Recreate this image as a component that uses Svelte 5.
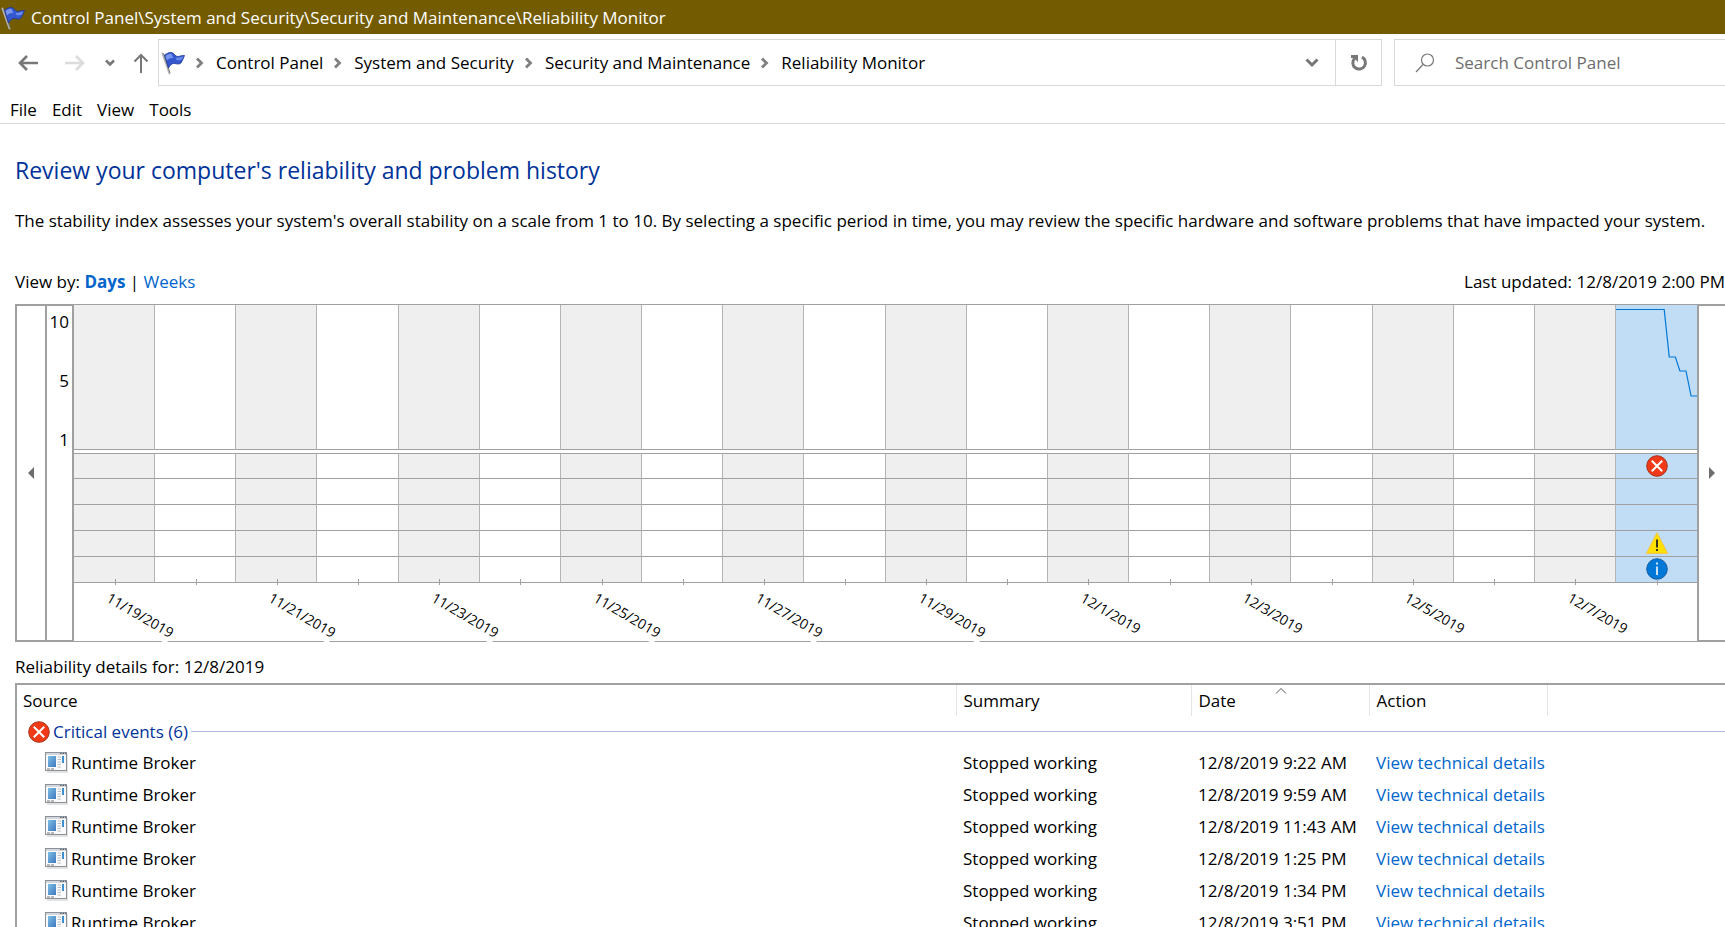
<script>
	const crumbs = ['Control Panel', 'System and Security', 'Security and Maintenance', 'Reliability Monitor'];
	const menus = ['File', 'Edit', 'View', 'Tools'];

	const labels = [
		'11/19/2019',
		'11/21/2019',
		'11/23/2019',
		'11/25/2019',
		'11/27/2019',
		'11/29/2019',
		'12/1/2019',
		'12/3/2019',
		'12/5/2019',
		'12/7/2019'
	];

	// one column per day, every second one carries a date
	const days = Array.from({ length: 20 }, (_, i) => ({
		label: i % 2 === 0 ? labels[i / 2] : '',
		events: i === 19 ? ['error', '', '', 'warning', 'info'] : ['', '', '', '', '']
	}));

	const events = [
		{ source: 'Runtime Broker', date: '12/8/2019 9:22 AM' },
		{ source: 'Runtime Broker', date: '12/8/2019 9:59 AM' },
		{ source: 'Runtime Broker', date: '12/8/2019 11:43 AM' },
		{ source: 'Runtime Broker', date: '12/8/2019 1:25 PM' },
		{ source: 'Runtime Broker', date: '12/8/2019 1:34 PM' },
		{ source: 'Runtime Broker', date: '12/8/2019 3:51 PM' }
	];

	let selected = $state(19);
	let search = $state('');
</script>

{#snippet flag()}
	<svg class="flag" width="24" height="24" viewBox="0 0 24 24" aria-hidden="true">
		<path d="M1.5 2.5 L8.5 22.5" stroke="#b4b4b4" stroke-width="2" stroke-linecap="round" />
		<path d="M2.5 2.5 L9 22" stroke="#6f6f6f" stroke-width="0.8" />
		<path
			d="M3.5 4 C6 2.5 8 1 10.500 1.500 C13.500 2 14 5.500 16.500 5.500 C19 5.500 21 4 23.500 4.500 C22.500 7 21.500 9.500 20 12 C18 13.500 16 13 14 12.500 C11.500 12 9.500 13.500 7.500 17 Z"
			fill="#3457cf"
			stroke="#1d3796"
			stroke-width="0.8"
		/>
		<path d="M4.500 5 C7 3 9 2.500 10.500 3 L12.500 7.500 C10 6.500 8 7.500 6 9.500 Z" fill="#7896ee" />
		<path d="M14.500 6.500 C17 7.500 19.500 6 22.300 5.500 L20.800 8.500 C18.500 9.500 16.500 9.500 15.500 9 Z" fill="#6c8cec" />
	</svg>
{/snippet}

{#snippet status(kind, size)}
	<svg width={size} height={size} viewBox="0 0 22 22" aria-label={kind} role="img">
		{#if kind === 'error'}
			<circle cx="11" cy="11" r="10.300" fill="#f03a17" stroke="#a8321c" />
			<path d="M5.800 5.800 L16.200 16.200 M16.200 5.800 L5.800 16.200" stroke="#fff" stroke-width="2" />
		{:else if kind === 'warning'}
			<path d="M11 0.800 L21.500 21.300 H0.500 Z" fill="#ffe100" stroke="#fdc33a" />
			<path d="M11 7.500 V15.500 M11 17 V19" stroke="#222" stroke-width="1.800" />
		{:else}
			<circle cx="11" cy="11" r="10.300" fill="#0078d7" stroke="#1a5fa3" />
			<path d="M11 4.500 V6.500 M11 8.500 V17" stroke="#fff" stroke-width="1.600" />
		{/if}
	</svg>
{/snippet}

{#snippet appIcon()}
	<svg width="24" height="22" viewBox="0 0 24 22" aria-hidden="true">
		<rect x="2" y="2" width="21" height="19" fill="#e2e2e2" />
		<rect x="0.500" y="0.500" width="21" height="18" fill="#fafafa" stroke="#8b9198" />
		<rect x="1" y="1" width="20" height="2" fill="#d3d8de" />
		<path d="M15 1.500 h1.500 M17.500 1.500 h1.500 M20 1.500 h1" stroke="#555d68" />
		<defs>
			<linearGradient id="pane" x1="0" y1="0" x2="1" y2="1">
				<stop offset="0" stop-color="#7cc0e6" />
				<stop offset="1" stop-color="#3f78bd" />
			</linearGradient>
		</defs>
		<rect x="3" y="4" width="8" height="11" fill="url(#pane)" />
		<path d="M12.500 5 h3.500 M12.500 7.500 h3.500 M12.500 10 h3.500 M12.500 12.500 h3.500 M12.500 15 h3.500" stroke="#b9bdc2" />
		<rect x="17" y="4" width="2" height="7" fill="#3f8fd0" />
		<path d="M2 17 h3 M6 17 h3" stroke="#777" />
	</svg>
{/snippet}

{#snippet chevron()}
	<svg width="10" height="12" viewBox="0 0 10 12" aria-hidden="true">
		<path d="M2 1.500 L6.500 6 L2 10.500" fill="none" stroke="#808080" stroke-width="2.800" />
	</svg>
{/snippet}

<div class="window">
	<header class="title">
		{@render flag()}
		<span>Control Panel\System and Security\Security and Maintenance\Reliability Monitor</span>
	</header>

	<div class="toolbar">
		<div class="nav">
			<button aria-label="Back">
				<svg width="20" height="18" viewBox="0 0 20 18">
					<path d="M20 9 H2 M9 2 L2 9 L9 16" fill="none" stroke="#777" stroke-width="2.600" />
				</svg>
			</button>
			<button aria-label="Forward" disabled>
				<svg width="20" height="18" viewBox="0 0 20 18">
					<path d="M0 9 H18 M11 2 L18 9 L11 16" fill="none" stroke="#dcdcdc" stroke-width="2.600" />
				</svg>
			</button>
			<button aria-label="Recent locations">
				<svg width="10" height="8" viewBox="0 0 10 8">
					<path d="M1 1.500 L5 5.500 L9 1.500" fill="none" stroke="#777" stroke-width="2.600" />
				</svg>
			</button>
			<button aria-label="Up">
				<svg width="16" height="20" viewBox="0 0 16 20">
					<path d="M8 20 V2 M1.500 8.500 L8 2 L14.500 8.500" fill="none" stroke="#777" stroke-width="2" />
				</svg>
			</button>
		</div>

		<nav class="address" aria-label="Address">
			{@render flag()}
			<ol>
				{#each crumbs as crumb}
					<li>
						{@render chevron()}
						<button>{crumb}</button>
					</li>
				{/each}
			</ol>
			<button class="history" aria-label="Previous locations">
				<svg width="14" height="10" viewBox="0 0 14 10">
					<path d="M1.500 1.500 L7 7 L12.500 1.500" fill="none" stroke="#777" stroke-width="3" />
				</svg>
			</button>
			<button class="refresh" aria-label="Refresh">
				<svg width="18" height="18" viewBox="0 0 18 18">
					<path d="M12 3.200 A6.300 6.300 0 1 1 4.500 4.500" fill="none" stroke="#777" stroke-width="3" />
					<path d="M1 1 H8 V8 L5.500 5.500 L3 4 H1 Z" fill="#777" />
				</svg>
			</button>
		</nav>

		<label class="search">
			<svg width="20" height="20" viewBox="0 0 20 20" aria-hidden="true">
				<circle cx="12.500" cy="7" r="6" fill="none" stroke="#777" stroke-width="1.200" />
				<path d="M8 11.500 L1 19" stroke="#777" stroke-width="1.200" />
			</svg>
			<input type="text" placeholder="Search Control Panel" aria-label="Search Control Panel" bind:value={search} />
		</label>
	</div>

	<div class="menu">
		{#each menus as item}
			<button>{item}</button>
		{/each}
	</div>

	<main>
		<h1>Review your computer's reliability and problem history</h1>
		<p class="intro">
			The stability index assesses your system's overall stability on a scale from 1 to 10. By selecting a specific
			period in time, you may review the specific hardware and software problems that have impacted your system.
		</p>

		<div class="view">
			<span>View by: <a class="current" href="#days">Days</a> | <a href="#weeks">Weeks</a></span>
			<span>Last updated: 12/8/2019 2:00 PM</span>
		</div>

		<section class="chart">
			<button class="scroll" aria-label="Earlier">
				<svg width="6" height="12" viewBox="0 0 6 12"><path d="M6 0 V12 L0 6 Z" fill="#6d6d6d" /></svg>
			</button>
			<div class="scale">
				<span>10</span>
				<span>5</span>
				<span>1</span>
			</div>
			<div class="days">
				{#each days as day, i}
					<button class="day" class:selected={i === selected} aria-label="Day {i + 1}" onclick={() => (selected = i)}>
						<span class="index">
							{#if i === 19}
								<svg width="100%" height="144" viewBox="0 0 80 144" preserveAspectRatio="none">
									<path
										d="M0 4.500 H47.500 L52.500 52 H58.500 L63 66 H69 L74 91 H80"
										fill="none"
										stroke="#0078d7"
										stroke-width="1.200"
									/>
								</svg>
							{/if}
						</span>
						{#each day.events as kind}
							<span class="cell">
								{#if kind}{@render status(kind, 22)}{/if}
							</span>
						{/each}
						<span class="axis">
							{#if day.label}<span class="date">{day.label}</span>{/if}
						</span>
					</button>
				{/each}
			</div>
			<button class="scroll later" aria-label="Later">
				<svg width="6" height="12" viewBox="0 0 6 12"><path d="M0 0 V12 L6 6 Z" fill="#6d6d6d" /></svg>
			</button>
		</section>

		<h2>Reliability details for: 12/8/2019</h2>

		<div class="details">
			<table>
				<colgroup>
					<col />
					<col class="w-summary" />
					<col class="w-date" />
					<col class="w-action" />
					<col class="w-rest" />
				</colgroup>
				<thead>
					<tr>
						<th>Source</th>
						<th>Summary</th>
						<th class="sorted">
							Date
							<svg width="12" height="8" viewBox="0 0 12 8" aria-hidden="true">
								<path d="M1 6.500 L6 1.500 L11 6.500" fill="none" stroke="#555" />
							</svg>
						</th>
						<th>Action</th>
						<th></th>
					</tr>
				</thead>
				<tbody>
					<tr>
						<td class="group" colspan="5">
							<div>
								{@render status('error', 22)}
								<span>Critical events (6)</span>
								<hr />
							</div>
						</td>
					</tr>
					{#each events as event}
						<tr>
							<td>
								<div class="source">{@render appIcon()}{event.source}</div>
							</td>
							<td>Stopped working</td>
							<td>{event.date}</td>
							<td><a href="#details">View technical details</a></td>
							<td></td>
						</tr>
					{/each}
				</tbody>
			</table>
		</div>
	</main>
</div>

<style>
	:global(body) {
		margin: 0;
		background: #fff;
	}

	.window {
		height: 100vh;
		overflow: hidden;
		font-family: 'Open Sans', 'Noto Sans', sans-serif;
		font-size: 17px;
		line-height: 24px;
		color: #000;
	}

	button {
		margin: 0;
		padding: 0;
		border: 0;
		background: none;
		font: inherit;
		color: inherit;
	}

	svg {
		display: block;
		flex: none;
	}

	a {
		color: #0066cc;
		text-decoration: none;
	}

	.title {
		display: flex;
		align-items: center;
		gap: 6px;
		box-sizing: border-box;
		height: 34px;
		padding: 2px 0 0 1px;
		background: #735b02;
		color: #fff;
		white-space: nowrap;
	}

	.toolbar {
		display: flex;
		align-items: center;
		padding-top: 5px;
	}

	.nav {
		display: flex;
		align-items: center;
		width: 140px;
		padding-left: 18px;
	}

	.nav button:nth-child(2) {
		margin: 0 20px 0 27px;
	}

	.nav button:nth-child(4) {
		margin-left: 18px;
	}

	.address {
		display: flex;
		align-items: center;
		flex: 1;
		height: 45px;
		padding-left: 2px;
		border: 1px solid #d9d9d9;
	}

	ol {
		display: flex;
		flex: 1;
		margin: 0;
		padding: 0;
		list-style: none;
	}

	li {
		display: flex;
		align-items: center;
		gap: 11px;
		margin-left: 10px;
		white-space: nowrap;
	}

	.history {
		padding: 0 16px;
	}

	.refresh {
		display: flex;
		align-items: center;
		justify-content: center;
		align-self: stretch;
		width: 46px;
		border-left: 1px solid #d9d9d9;
	}

	.search {
		display: flex;
		align-items: center;
		gap: 20px;
		width: 310px;
		height: 45px;
		margin-left: 12px;
		padding-left: 20px;
		border: 1px solid #d9d9d9;
		border-right: 0;
	}

	.search input {
		flex: 1;
		min-width: 0;
		padding: 0;
		border: 0;
		outline: 0;
		font: inherit;
	}

	.search input::placeholder {
		color: #6d6d6d;
		opacity: 1;
	}

	.menu {
		display: flex;
		gap: 15px;
		padding: 12px 10px 1px;
		border-bottom: 1px solid #d9d9d9;
	}

	main {
		padding: 29px 0 0 15px;
	}

	h1 {
		margin: 0;
		font-size: 23px;
		font-weight: 400;
		line-height: 34px;
		color: #003399;
	}

	.intro {
		margin: 22px 0 37px;
		white-space: nowrap;
	}

	.view {
		display: flex;
		justify-content: space-between;
		margin-bottom: 10px;
	}

	.current {
		font-weight: 700;
	}

	.chart {
		display: flex;
		height: 338px;
	}

	.scroll {
		display: flex;
		align-items: center;
		justify-content: center;
		width: 32px;
		border: 2px solid #a0a0a0;
	}

	.later {
		width: 28px;
		border-right: 0;
	}

	.scale {
		display: flex;
		flex-direction: column;
		gap: 35px;
		width: 22px;
		padding: 4px 3px 0 0;
		border: 2px solid #a0a0a0;
		border-left: 0;
		text-align: right;
	}

	.days {
		display: flex;
		flex: 1;
		border: solid #a0a0a0;
		border-width: 1px 0;
	}

	.day {
		display: flex;
		flex-direction: column;
		flex: 1 1 0;
		min-width: 0;
	}

	.index,
	.cell {
		display: flex;
		align-items: center;
		justify-content: center;
		box-sizing: border-box;
		width: 100%;
		height: 26px;
		padding-bottom: 1px;
		border-right: 1px solid #b4b4b4;
		border-bottom: 1px solid #a0a0a0;
	}

	.day:last-child .index,
	.day:last-child .cell {
		border-right: 0;
	}

	.index {
		height: 145px;
		margin-bottom: 3px;
		padding: 0;
	}

	.index + .cell {
		border-top: 1px solid #a0a0a0;
	}

	.day:nth-child(odd) .index,
	.day:nth-child(odd) .cell {
		background: #efefef;
	}

	.day.selected .index,
	.day.selected .cell {
		background: #c0ddf5;
	}

	.axis {
		position: relative;
		width: 100%;
		flex: 1;
	}

	.axis::before {
		content: '';
		position: absolute;
		top: -4px;
		left: 50%;
		height: 6px;
		border-left: 1px solid #a0a0a0;
	}

	.date {
		position: absolute;
		top: 5px;
		left: 48%;
		padding-bottom: 2px;
		background: #fff;
		font-size: 14px;
		line-height: 20px;
		transform: rotate(30deg);
		transform-origin: 0 0;
	}

	h2 {
		margin: 13px 0 4px;
		font-size: 17px;
		font-weight: 400;
		line-height: 24px;
	}

	.details {
		border: 2px solid #a0a0a0;
		border-width: 2px 0 0 2px;
	}

	table {
		width: 100%;
		table-layout: fixed;
		border-collapse: collapse;
	}

	.w-summary {
		width: 235px;
	}

	.w-date,
	.w-action,
	.w-rest {
		width: 178px;
	}

	th,
	td {
		height: 32px;
		padding: 0 0 0 7px;
		font-weight: 400;
		text-align: left;
		white-space: nowrap;
	}

	th {
		position: relative;
		height: 30px;
		padding-top: 1px;
		border-right: 1px solid #e5e5e5;
	}

	th:first-child,
	td:first-child {
		padding-left: 6px;
	}

	th:last-child {
		border-right: 0;
	}

	.sorted svg {
		position: absolute;
		top: 2px;
		left: 47%;
	}

	td.group {
		height: 31px;
		color: #003399;
	}

	.group div,
	.source {
		display: flex;
		align-items: center;
	}

	.group div {
		gap: 3px;
		padding-left: 5px;
	}

	.group hr {
		flex: 1;
		margin: 0;
		border: 0;
		border-top: 1px solid #b0bcdf;
	}

	.source {
		gap: 2px;
		padding-left: 22px;
	}
</style>
